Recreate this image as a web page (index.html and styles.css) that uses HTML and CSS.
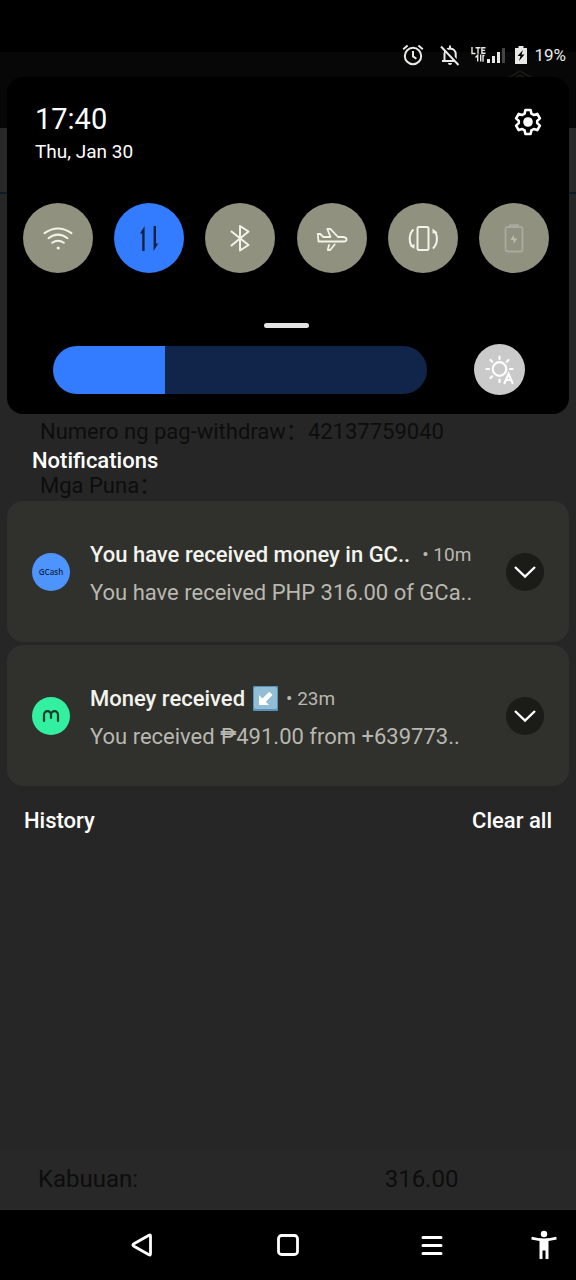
FILE: index.html
```html
<!DOCTYPE html>
<html lang="en">
<head>
<meta charset="utf-8">
<meta name="viewport" content="width=device-width, initial-scale=1">
<title>Notifications</title>
<link rel="stylesheet" href="styles.css">
</head>
<body>
<div class="screen">
  <div class="app">
    <div class="app-header">
      <svg class="app-badge" width="28" height="32" viewBox="0 0 28 32"><path d="M2 8 14 1l12 7v16l-12 7-12-7zM7 9l7-4 7 4" fill="none" stroke="#1c1a17" stroke-width="1.5"/></svg>
    </div>
    <div class="app-tabs"></div>
    <dl class="app-details">
      <div class="app-row"><dt>Numero ng pag-withdraw：</dt><dd>42137759040</dd></div>
      <div class="app-row"><dt>Mga Puna：</dt><dd></dd></div>
    </dl>
    <dl class="app-total"><dt>Kabuuan:</dt><dd>316.00</dd></dl>
  </div>

  <div class="shade">
    <header class="status">
      <svg width="22" height="22" viewBox="0 0 22 22" fill="none" stroke="#e9e9e6" stroke-width="2"><circle cx="11" cy="12" r="8.2"/><path d="M11 7v5.4l3.4 2.4M1.2 5.2 5.6 1.5M20.8 5.2l-4.4-3.7"/></svg>
      <svg class="status-bell" width="22" height="22" viewBox="0 0 22 22"><path d="M5.5 16.5V10c0-3 2-5.4 5.5-5.6 3.500.2 5.700 2.600 5.700 5.600v5.500M3 17h13M11 1.500v3" fill="none" stroke="#e9e9e6" stroke-width="2"/><path d="M9 19h4a2 2 0 0 1-4 0z" fill="#e9e9e6"/><path d="M3.500 1.500 21 20" stroke="#000" stroke-width="2"/><path d="M2 2.500 19.500 21" stroke="#e9e9e6" stroke-width="2"/></svg>
      <svg class="status-signal" width="34" height="20" viewBox="0 0 34 20"><path d="M1 2v6.500h3.500M4.500 2.700h5M7 2.700v6M14.500 2.700h-3.600v5.500h3.600M11 5.400h3" fill="none" stroke="#e9e9e6" stroke-width="1.400"/><path d="M6.700 16.500v-6.200L4.500 12.600M9.700 9.500v7M12 16.800V10.500h1.500" fill="none" stroke="#e9e9e6" stroke-width="1.400"/><path d="M16 14h3v4h-3zM21 11h3v7h-3zM26 7h3v11h-3z" fill="#e9e9e6"/><path d="M31 3h3v15h-3z" fill="#444"/></svg>
      <svg width="12" height="18" viewBox="0 0 12 18"><path d="M3.500 0h5v2H12v16H0V2h3.500z" fill="#e9e9e6"/><path d="M8 4 2.500 10h3L4 15l5.500-6.500h-3z" fill="#000"/></svg>
      <span class="status-level">19%</span>
    </header>

    <section class="panel" aria-label="Quick settings">
      <div class="panel-top">
        <div>
          <div class="time">17:40</div>
          <div class="date">Thu, Jan 30</div>
        </div>
        <button class="icon-button settings" aria-label="Settings">
          <svg width="28" height="28" viewBox="0 0 28 28"><path d="M11.400 2h5.200l.8 3.600 2.400 1.400 3.500-1.100 2.600 4.500-2.700 2.500v2.200l2.700 2.500-2.600 4.500-3.500-1.100-2.400 1.400-.8 3.600h-5.200l-.8-3.600L8.200 21l-3.500 1.100-2.600-4.500 2.700-2.500v-2.200L2.100 10.400l2.600-4.500L8.200 7l2.400-1.400z" fill="none" stroke="#fff" stroke-width="2.600" stroke-linejoin="round"/><circle cx="14" cy="14" r="4.800" fill="#fff"/></svg>
        </button>
      </div>

      <div class="tiles">
        <button class="tile" aria-label="Wi-Fi"><svg width="34" height="34" viewBox="0 0 34 34" fill="none" stroke="#f4f3e8" stroke-width="2" stroke-linecap="round"><path d="M3.500 12.200Q17 3 30.500 12.200M7.500 17.200Q17 10 26.500 17.200M11.200 21.800Q17 17.500 22.800 21.800"/><circle cx="17.200" cy="27" r="1.600" fill="#f4f3e8" stroke="none"/></svg></button>
        <button class="tile tile-on" aria-label="Mobile data"><svg width="34" height="34" viewBox="0 0 34 34" fill="#15223d"><path d="M12.600 5v25h-2.400V12.500H8zM21.600 5H24v17.500h2.200L21.600 30z"/></svg></button>
        <button class="tile" aria-label="Bluetooth"><svg width="34" height="34" viewBox="0 0 34 34" fill="none" stroke="#f4f3e8" stroke-width="2" stroke-linejoin="round" stroke-linecap="round"><path d="m8.500 10.500 17 13.500-8.500 5.500V5l8.500 5.500-17 14"/></svg></button>
        <button class="tile" aria-label="Airplane mode"><svg width="34" height="34" viewBox="0 0 34 34" fill="none" stroke="#f4f3e8" stroke-width="1.800" stroke-linejoin="round" stroke-linecap="round"><path d="M3.500 20.500 2.800 13h2.500l3 3h7.200L12.300 7.800h3L23 16h5.500c4 .5 4 4.500.5 4.500zM14 24l-1.200 5h2.400l4.500-5.500"/></svg></button>
        <button class="tile" aria-label="Auto-rotate"><svg width="34" height="34" viewBox="0 0 34 34" fill="none" stroke="#f4f3e8" stroke-width="2"><rect x="11.500" y="6" width="11" height="23" rx="1.500"/><path d="M7.500 8.500C3 12.500 2.500 21 6 25.500M26.800 27.500c5-4 5.200-12.500 2-17"/><path d="M8.500 23v5L3.800 25zM26.500 7.500v5l5-1z" fill="#f4f3e8" stroke="none"/></svg></button>
        <button class="tile" aria-label="Battery saver"><svg width="34" height="34" viewBox="0 0 34 34" fill="none" stroke="#a9aa9f" stroke-width="1.800"><rect x="8.500" y="6" width="17" height="24.500" rx="2"/><path d="M12 4.500h10" stroke-width="2.500"/><path d="m16.500 14-3 5h3v4l4-5.500h-3z" fill="#b9baae" stroke="none"/></svg></button>
      </div>

      <div class="handle"></div>

      <div class="brightness">
        <input class="brightness-slider" type="range" min="0" max="100" value="30" aria-label="Brightness">
        <button class="icon-button auto" aria-label="Automatic brightness">
          <svg width="32" height="32" viewBox="0 0 32 32" fill="none" stroke="#fff" stroke-width="2.200" stroke-linecap="round"><circle cx="15.500" cy="15" r="6.800"/><path d="M15.500 2.500V5M15.500 25.500V28M2.500 15H5M26 15h2.500M6.500 6l1.700 1.700M24.500 6l-1.700 1.700M6.500 24l1.700-1.700M20.500 29l4-9 4 9M22 26h5"/></svg>
        </button>
      </div>
    </section>

    <main>
      <h1 class="heading">Notifications</h1>
      <ul class="cards">
        <li class="card">
          <span class="logo logo-gcash">GCash</span>
          <div class="card-body">
            <div class="card-head"><h2 class="card-title">You have received money in GC..</h2><span class="card-age card-age-wide">• 10m</span></div>
            <p class="card-text">You have received PHP 316.00 of GCa..</p>
          </div>
          <button class="icon-button expand" aria-label="Expand"><svg width="22" height="14" viewBox="0 0 22 14"><path d="m1 2 10 9.500L21 2" fill="none" stroke="#fff" stroke-width="2.400"/></svg></button>
        </li>
        <li class="card">
          <span class="logo logo-maya"><svg width="18" height="14" viewBox="0 0 18 14" fill="none" stroke="#113b2b" stroke-width="2.200" stroke-linecap="round"><path d="M2 12V6a3.500 3.800 0 0 1 7 0v3M9 6a3.500 3.800 0 0 1 7 0v6"/></svg></span>
          <div class="card-body">
            <div class="card-head"><h2 class="card-title">Money received</h2><svg class="arrow" width="25" height="25" viewBox="0 0 25 25" role="img" aria-label="Down-left arrow"><rect width="25" height="25" rx="1" fill="#5795b8"/><rect x="1" y="1" width="23" height="22" rx="2" fill="#92bdd5"/><path d="M6 9v10h10l-3.200-3.200 6.700-6.900-3.200-3.200-6.900 6.700z" fill="#fff"/></svg><span class="card-age">• 23m</span></div>
            <p class="card-text">You received ₱491.00 from +639773..</p>
          </div>
          <button class="icon-button expand" aria-label="Expand"><svg width="22" height="14" viewBox="0 0 22 14"><path d="m1 2 10 9.500L21 2" fill="none" stroke="#fff" stroke-width="2.400"/></svg></button>
        </li>
      </ul>
      <div class="actions">
        <button class="text-button">History</button>
        <button class="text-button">Clear all</button>
      </div>
    </main>
  </div>
</div>

<nav class="nav" aria-label="System navigation">
  <button class="icon-button nav-back" aria-label="Back"><svg width="24" height="26" viewBox="0 0 24 26"><path d="M20.500 4v18q0 1.500-1.500.8L3.500 14q-1.200-1 0-2L19 3.200q1.500-.7 1.500.8z" fill="none" stroke="#fff" stroke-width="2.800" stroke-linejoin="round"/></svg></button>
  <button class="icon-button nav-home" aria-label="Home"><svg width="24" height="24" viewBox="0 0 24 24"><rect x="2.500" y="2.500" width="19" height="19" rx="3" fill="none" stroke="#fff" stroke-width="2.800"/></svg></button>
  <button class="icon-button nav-recent" aria-label="Recent apps"><svg width="22" height="22" viewBox="0 0 22 22"><path d="M2 3.500h18M2 11.500h18M2 19.500h18" stroke="#fff" stroke-width="3" stroke-linecap="round"/></svg></button>
  <button class="icon-button nav-access" aria-label="Accessibility"><svg width="26" height="30" viewBox="0 0 26 30" fill="#fff"><circle cx="13" cy="4" r="3.200"/><path d="M.8 6.800Q13 10 25.200 6.800l.5 2.600-8.200 1.500V29h-3v-8.500h-3V29h-3V10.900L.3 9.400z"/></svg></button>
</nav>
</body>
</html>
```
FILE: styles.css
```css
* { box-sizing: border-box; }

body {
  margin: 0;
  min-height: 100vh;
  display: flex;
  flex-direction: column;
  background: #000;
  color: #fff;
  font-family: Roboto, "Noto Sans CJK SC", sans-serif;
}

h1, h2, p, ul, dl, dd { margin: 0; padding: 0; }
ul { list-style: none; }
svg { display: block; flex: none; }

button {
  border: 0;
  padding: 0;
  background: none;
  color: inherit;
  font: inherit;
}

.icon-button { display: grid; place-items: center; }

/* The dimmed app and the shade share one grid cell. */
.screen { flex: 1; display: grid; }
.app, .shade { grid-area: 1 / 1; min-width: 0; }

.app {
  display: flex;
  flex-direction: column;
  padding-top: 52px;
  background: #000;
  color: #0d0d0d;
  font-size: 22px;
  line-height: 30px;
}
.app-header {
  display: flex;
  justify-content: flex-end;
  height: 76px;
  padding: 18px 42px 0 0;
  background: #070707;
}
.app-tabs { height: 66px; background: #282828; border-bottom: 2px solid #0b1a28; }
.app-details {
  flex: 1;
  display: flex;
  flex-direction: column;
  gap: 24px;
  padding: 223px 40px 0;
  background: #262626;
}
.app-row { display: flex; min-height: 30px; }
.app-total {
  display: grid;
  grid-template-columns: 2fr 1fr;
  gap: 12px;
  padding: 14px 24px 16px 38px;
  background: #282828;
  font-size: 24px;
}

.shade { display: flex; flex-direction: column; padding: 33px 7px 0; }

.status {
  display: flex;
  align-items: center;
  justify-content: flex-end;
  height: 44px;
  padding-right: 3px;
}
.status-bell { margin-left: 15px; }
.status-signal { margin: 0 10px; }
.status-level { margin-left: 7px; font-size: 17px; color: #e9e9e6; }

.panel {
  padding: 24px 20px 19px 16px;
  border-radius: 16px;
  background: #000;
}
.panel-top {
  display: flex;
  justify-content: space-between;
  align-items: flex-start;
  padding: 0 7px 0 12px;
}
.time { font-size: 29px; line-height: 36px; }
.date { font-size: 19px; line-height: 30px; }
.settings { padding-top: 7px; }

.tiles { display: flex; justify-content: space-between; margin-top: 36px; }
.tile {
  display: grid;
  place-items: center;
  width: 70px;
  height: 70px;
  border-radius: 50%;
  background: #90917f;
}
.tile-on { background: #347cff; }

.handle {
  width: 45px;
  height: 5px;
  margin: 50px auto 16px;
  border-radius: 3px;
  background: #e4e4e4;
}

.brightness { display: flex; align-items: center; gap: 47px; padding: 0 24px 0 30px; }
.brightness-slider {
  appearance: none;
  flex: 1;
  min-width: 0;
  height: 48px;
  margin: 0;
  border-radius: 24px;
  background: linear-gradient(to right, #347cff 30%, #11244a 30%);
}
.brightness-slider::-webkit-slider-thumb { appearance: none; width: 1px; height: 48px; background: none; }
.auto { width: 51px; height: 51px; border-radius: 50%; background: #cacaca; }

.heading {
  padding: 33px 25px 26px;
  font-size: 22px;
  font-weight: 500;
  line-height: 28px;
}

.cards { display: flex; flex-direction: column; gap: 3px; }
.card {
  display: flex;
  align-items: center;
  gap: 20px;
  min-height: 141px;
  padding: 0 25px;
  border-radius: 16px;
  background: #30302c;
}
.logo {
  display: grid;
  place-items: center;
  flex: none;
  width: 38px;
  height: 38px;
  border-radius: 50%;
}
.logo-gcash { background: #4d94ff; color: #12294d; font: 600 8px "Open Sans", sans-serif; }
.logo-maya { background: #32f0a0; }

.card-body { flex: 1; min-width: 0; padding-top: 4px; white-space: nowrap; }
.card-head { display: flex; align-items: center; }
.card-title { font-size: 22px; font-weight: 500; line-height: 38px; color: #f3f3ee; }
.arrow { margin: 0 8px; }
.card-age { font-size: 19px; color: #b8b8b0; }
.card-age-wide { margin-left: 12px; }
.card-text { font-size: 22px; line-height: 38px; color: #b8b8b0; }
.expand { flex: none; width: 38px; height: 38px; border-radius: 50%; background: #1b1b18; }

.actions { display: flex; justify-content: space-between; padding: 20px 17px; }
.text-button { font-size: 22px; font-weight: 500; line-height: 30px; }

.nav {
  display: grid;
  grid-template-columns: 1fr 2fr 2fr 2fr 1fr;
  height: 70px;
  background: #000;
}
.nav-back { grid-column: 2; padding-right: 4px; }
.nav-access { padding-left: 8px; }
```
